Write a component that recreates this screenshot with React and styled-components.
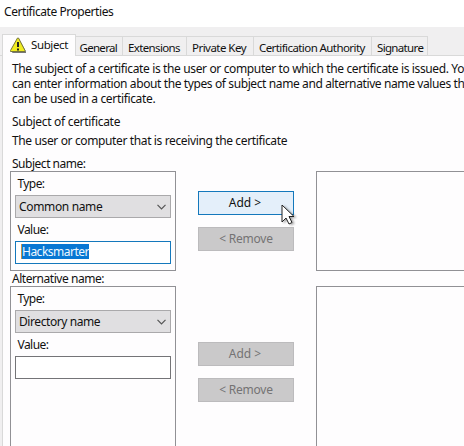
import React from "react";
import styled, { createGlobalStyle } from "styled-components";

const GlobalStyle = createGlobalStyle`
  * { box-sizing: border-box; }
  body { margin: 0; overflow: hidden; background: #fefdfe; }
`;

const Window = styled.div`
  width: 464px;
  height: 446px;
  overflow: hidden;
  display: flex;
  flex-direction: column;
  background: #f0eff0;
  color: #111;
  font: 12px/15px "Noto Sans", "Open Sans", sans-serif;
  white-space: nowrap;
`;

const TitleBar = styled.header`
  height: 27px;
  flex: none;
  padding: 4px 0 0 4px;
  background: #fff;
  letter-spacing: ${(p) => p.$spacing}px;
`;

const Tabs = styled.nav`
  height: 29px;
  flex: none;
  display: flex;
  align-items: flex-end;
  padding-left: 2px;
  box-shadow: inset 0 -1px #d9d9d9;
`;

const Tab = styled.div`
  width: ${(p) => p.$width}px;
  height: 20px;
  padding: 3px 0 0 ${(p) => p.$pad}px;
  border: 1px solid #d9d9d9;
  border-left: 0;
  font-size: 11.5px;
  letter-spacing: ${(p) => p.$spacing}px;
`;

const ActiveTab = styled(Tab)`
  height: 22px;
  display: flex;
  padding: 2px 0 0 7px;
  border-left: 1px solid #d9d9d9;
  border-bottom: 0;
  background: #fefdfe;
`;

const TabLabel = styled.span`
  margin-left: 5px;
`;

const Panel = styled.main`
  flex: 1;
  min-height: 0;
  margin-left: 2px;
  padding: 5px 0 0 7px;
  border-left: 1px solid #d9d9d9;
  background: #fefdfe;
`;

const Line = styled.div`
  height: 15px;
  padding-left: 2px;
  margin-top: ${(p) => p.$gap || 0}px;
  letter-spacing: ${(p) => p.$spacing || 0}px;
`;

const Section = styled.section`
  display: flex;
  height: ${(p) => p.$height}px;
`;

const Group = styled.div`
  width: 166px;
  flex: none;
  padding: 4px 4px 0;
  border: 1px solid #919195;
`;

const FieldLabel = styled.div`
  height: 15px;
  margin: 0 0 4px 2.5px;
  letter-spacing: ${(p) => p.$spacing || 0}px;
`;

const Select = styled.div`
  height: 23px;
  margin-bottom: 4px;
  padding: 3px 4px 0 3px;
  display: flex;
  justify-content: space-between;
  border: 1px solid #aaa9ab;
  background: #e0dfe1;
  letter-spacing: ${(p) => p.$spacing || 0}px;
`;

const Chevron = styled.svg`
  width: 9px;
  height: 6px;
  margin-top: 5px;
  fill: none;
  stroke: #555;
  stroke-width: 1.2;
`;

const Field = styled.div`
  height: 23px;
  padding: 2px 0 0 5px;
  border: 1px solid ${(p) => (p.$focus ? "#1478bc" : "#747477")};
  background: #fff;
`;

const Selection = styled.span`
  display: inline-block;
  width: 68px;
  height: 15px;
  background: #0877d3;
  color: #eef8ff;
  border-left: 1px solid #c69249;
  letter-spacing: ${(p) => p.$spacing || 0}px;
`;

const Actions = styled.div`
  width: 96px;
  margin: ${(p) => p.$top}px 22px 0;
  display: flex;
  flex-direction: column;
  gap: 12px;
  flex: none;
  position: relative;
`;

const Button = styled.div`
  height: 24px;
  flex: none;
  padding: 3px ${(p) => p.$inset || 0}px 0 0;
  text-align: center;
  border: 1px solid ${(p) => (p.$hot ? "#1478bc" : "#bcbbbd")};
  background: ${(p) => (p.$hot ? "#e4effa" : "#cac9ca")};
  color: ${(p) => (p.$hot ? "#111" : "#747374")};
  letter-spacing: ${(p) => p.$spacing || 0}px;
`;

const ListBox = styled.div`
  flex: 1;
  border: 1px solid #919195;
  border-right: 0;
`;

const Pointer = styled.svg`
  position: absolute;
  left: 83px;
  top: 13px;
  width: 16px;
  height: 23px;
  filter: drop-shadow(2px 1px 1px #0005);
`;

const WarningIcon = styled.svg`
  width: 16px;
  height: 16px;
  flex: none;
`;

function Warning() {
  return (
    <WarningIcon viewBox="0 0 16 16">
      <path d="M9 2 16 14.5V16H2z" fill="#777" />
      <path d="M7.5 1h1L15 13.5v1H.5v-1z" fill="#f0ec22" stroke="#77763c" />
      <path d="M8 5v5M8 11.5v2" stroke="#222" strokeWidth="2" />
    </WarningIcon>
  );
}

function Dropdown({ children, spacing }) {
  return (
    <Select $spacing={spacing}>
      <span>{children}</span>
      <Chevron viewBox="0 0 9 6"><path d="m.5.8 4 4 4-4" /></Chevron>
    </Select>
  );
}

export default function App() {
  return (
    <Window>
      <GlobalStyle />
      <TitleBar $spacing={-0.44}>Certificate Properties</TitleBar>
      <Tabs>
        <ActiveTab $width={74} $spacing={-0.38}>
          <Warning />
          <TabLabel>Subject</TabLabel>
        </ActiveTab>
        <Tab $width={47} $pad={3.5} $spacing={-0.7}>General</Tab>
        <Tab $width={64} $pad={5} $spacing={-0.64}>Extensions</Tab>
        <Tab $width={67} $pad={5} $spacing={-0.53}>Private Key</Tab>
        <Tab $width={118} $pad={5} $spacing={-0.58}>Certification Authority</Tab>
        <Tab $width={56} $pad={5} $spacing={-0.66}>Signature</Tab>
      </Tabs>
      <Panel>
        <Line $spacing={-0.365}>The subject of a certificate is the user or computer to which the certificate is issued. You</Line>
        <Line $spacing={-0.39}>can enter information about the types of subject name and alternative name values that</Line>
        <Line $spacing={-0.34}>can be used in a certificate.</Line>
        <Line $gap={8} $spacing={-0.3}>Subject of certificate</Line>
        <Line $gap={4} $spacing={-0.37}>The user or computer that is receiving the certificate</Line>
        <Line $gap={8} $spacing={-0.48}>Subject name:</Line>
        <Section $height={100}>
          <Group>
            <FieldLabel $spacing={-0.6}>Type:</FieldLabel>
            <Dropdown spacing={-0.35}>Common name</Dropdown>
            <FieldLabel $spacing={-0.55}>Value:</FieldLabel>
            <Field $focus><Selection $spacing={-0.5}>Hacksmarter</Selection></Field>
          </Group>
          <Actions $top={20}>
            <Button $hot $inset={2}>Add &gt;</Button>
            <Button $spacing={-0.25}>&lt; Remove</Button>
            <Pointer viewBox="0 0 16 23">
              <path d="M1 1v17l4-4 3 6 3-1.5-3-6h5z" fill="#fff" stroke="#222" />
            </Pointer>
          </Actions>
          <ListBox />
        </Section>
        <Line $spacing={-0.45}>Alternative name:</Line>
        <Section $height={180}>
          <Group>
            <FieldLabel $spacing={-0.6}>Type:</FieldLabel>
            <Dropdown spacing={-0.42}>Directory name</Dropdown>
            <FieldLabel $spacing={-0.55}>Value:</FieldLabel>
            <Field />
          </Group>
          <Actions $top={56}>
            <Button $inset={2}>Add &gt;</Button>
            <Button $spacing={-0.25}>&lt; Remove</Button>
          </Actions>
          <ListBox />
        </Section>
      </Panel>
    </Window>
  );
}
